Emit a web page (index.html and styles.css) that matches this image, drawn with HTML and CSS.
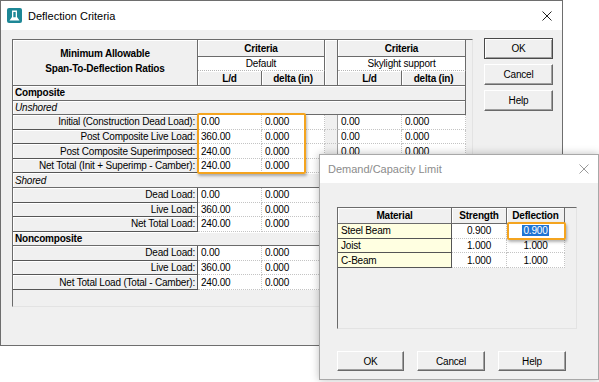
FILE: index.html
```html
<!DOCTYPE html>
<html lang="en">
<head>
    <meta charset="UTF-8">
    <title>Deflection Criteria</title>
    <link rel="stylesheet" href="styles.css">
</head>
<body>
    <div class="win main">
        <div class="titlebar">
            <svg class="app-icon" width="15" height="15" viewBox="0 0 15 15">
                <rect width="15" height="15" rx="2" fill="#1d8796"/>
                <path d="M5 2.5h5v6.5l2.5 3.5h-10l2.5-3.5z" fill="#fff"/>
                <path d="M6.3 4h2.4v5.2h-2.4z" fill="#1d8796"/>
            </svg>
            <span class="title">Deflection Criteria</span>
            <svg class="close" width="10" height="10" viewBox="0 0 10 10">
                <path d="M0.5 0.5l9 9M9.5 0.5l-9 9" stroke="#222" stroke-width="1"/>
            </svg>
        </div>
        <div class="win-body">
            <div class="frame">
                <div class="grid">
                    <div class="hd hd-main">Minimum Allowable<br>Span-To-Deflection Ratios</div>
                    <div class="hd crit-a">Criteria</div>
                    <div class="hd gap-hd"></div>
                    <div class="hd crit-b">Criteria</div>
                    <div class="sub sub-a">Default</div>
                    <div class="sub sub-b">Skylight support</div>
                    <div class="hd r3 c2">L/d</div>
                    <div class="hd r3 c3">delta (in)</div>
                    <div class="hd r3 c5">L/d</div>
                    <div class="hd r3 c6">delta (in)</div>

                    <div class="sec bold">Composite</div>
                    <div class="sec ital">Unshored</div>

                    <div class="lbl">Initial (Construction Dead Load):</div>
                    <div class="val">0.00</div><div class="val">0.000</div><div class="gap"></div><div class="val">0.00</div><div class="val">0.000</div>
                    <div class="lbl">Post Composite Live Load:</div>
                    <div class="val">360.00</div><div class="val">0.000</div><div class="gap"></div><div class="val">0.00</div><div class="val">0.000</div>
                    <div class="lbl">Post Composite Superimposed:</div>
                    <div class="val">240.00</div><div class="val">0.000</div><div class="gap"></div><div class="val">0.00</div><div class="val">0.000</div>
                    <!-- right-hand values below are hidden under the second dialog -->
                    <div class="lbl">Net Total (Init + Superimp - Camber):</div>
                    <div class="val">240.00</div><div class="val">0.000</div><div class="gap"></div><div class="val"></div><div class="val"></div>

                    <div class="sec ital">Shored</div>
                    <div class="lbl">Dead Load:</div>
                    <div class="val">0.00</div><div class="val">0.000</div><div class="gap"></div><div class="val"></div><div class="val"></div>
                    <div class="lbl">Live Load:</div>
                    <div class="val">360.00</div><div class="val">0.000</div><div class="gap"></div><div class="val"></div><div class="val"></div>
                    <div class="lbl">Net Total Load:</div>
                    <div class="val">240.00</div><div class="val">0.000</div><div class="gap"></div><div class="val"></div><div class="val"></div>

                    <div class="sec bold">Noncomposite</div>
                    <div class="lbl">Dead Load:</div>
                    <div class="val">0.00</div><div class="val">0.000</div><div class="gap"></div><div class="val"></div><div class="val"></div>
                    <div class="lbl">Live Load:</div>
                    <div class="val">360.00</div><div class="val">0.000</div><div class="gap"></div><div class="val"></div><div class="val"></div>
                    <div class="lbl">Net Total Load (Total - Camber):</div>
                    <div class="val">240.00</div><div class="val">0.000</div><div class="gap"></div><div class="val"></div><div class="val"></div>
                </div>
            </div>
            <div class="buttons">
                <div class="btn default">OK</div>
                <div class="btn">Cancel</div>
                <div class="btn">Help</div>
            </div>
        </div>
    </div>

    <div class="mark mark-main"></div>

    <div class="win dialog">
        <div class="titlebar dlg-title">
            <span class="title inactive">Demand/Capacity Limit</span>
            <svg class="close dlg-close" width="10" height="10" viewBox="0 0 10 10">
                <path d="M0.5 0.5l9 9M9.5 0.5l-9 9" stroke="#9a9a9a" stroke-width="1"/>
            </svg>
        </div>
        <div class="dlg-body">
            <div class="frame dlg-frame">
                <div class="grid dlg-grid">
                    <div class="hd">Material</div>
                    <div class="hd">Strength</div>
                    <div class="hd">Deflection</div>

                    <div class="mat">Steel Beam</div>
                    <div class="val center">0.900</div>
                    <div class="val center"><span class="sel">0.900</span></div>
                    <div class="mat">Joist</div>
                    <div class="val center">1.000</div>
                    <div class="val center">1.000</div>
                    <div class="mat">C-Beam</div>
                    <div class="val center">1.000</div>
                    <div class="val center">1.000</div>
                </div>
            </div>
            <div class="dlg-buttons">
                <div class="btn">OK</div>
                <div class="btn">Cancel</div>
                <div class="btn">Help</div>
            </div>
        </div>
    </div>

    <div class="mark mark-dlg"></div>
</body>
</html>
```

FILE: styles.css
```css
* {
    margin: 0;
    padding: 0;
    box-sizing: border-box;
}
body {
    position: relative;
    width: 599px;
    height: 382px;
    overflow: hidden;
    background: #fff;
    font-family: "Liberation Sans", Arial, sans-serif;
    font-size: 10px;
    letter-spacing: -0.2px;
    color: #000;
}
.win {
    background: #f0f0f0;
    border: 1px solid #6e6e6e;
}
.main {
    width: 563px;
    height: 346px;
}
.titlebar {
    height: 29px;
    background: #fff;
    display: flex;
    align-items: center;
    padding-left: 6px;
}
.app-icon {
    flex: none;
}
.title {
    font-size: 11px;
    letter-spacing: 0;
    margin-left: 6px;
}
.close {
    margin-left: auto;
    margin-right: 10px;
}
.win-body {
    display: flex;
    align-items: flex-start;
    padding: 8px 0 0 11px;
}
.frame {
    margin-top: 1px;
    width: 461px;
    height: 268px;
    border-top: 1px solid #6b6b6b;
    border-left: 1px solid #6b6b6b;
    border-right: 1px solid #e3e3e3;
    border-bottom: 1px solid #e3e3e3;
}
.grid {
    display: grid;
    grid-template-columns: 185px 64px 63px 13px 64px 64px;
    grid-template-rows: 17px 14px 15px;
    grid-auto-rows: 14.57px;
    width: 453px;
}
.grid > div {
    display: flex;
    align-items: center;
    white-space: nowrap;
    overflow: hidden;
}
.hd {
    justify-content: center;
    font-weight: bold;
    background: #f0f0f0;
    border-right: 1px solid #6b6b6b;
    border-bottom: 1px solid #6b6b6b;
    box-shadow: inset 1px 1px 0 #fff;
}
.hd-main {
    grid-column: 1;
    grid-row: 1 / span 3;
    text-align: center;
    line-height: 15px;
    padding-bottom: 4px;
}
.crit-a {
    grid-column: 2 / span 2;
    grid-row: 1;
}
.gap-hd {
    grid-column: 4;
    grid-row: 1 / span 3;
}
.crit-b {
    grid-column: 5 / span 2;
    grid-row: 1;
}
.sub {
    justify-content: center;
    background: #fff;
    border-right: 1px solid #6b6b6b;
    border-bottom: 1px dotted #b5b5b5;
}
.sub-a {
    grid-column: 2 / span 2;
    grid-row: 2;
}
.sub-b {
    grid-column: 5 / span 2;
    grid-row: 2;
}
.r3 {
    grid-row: 3;
}
.c2 { grid-column: 2; }
.c3 { grid-column: 3; }
.c5 { grid-column: 5; }
.c6 { grid-column: 6; }
.sec {
    grid-column: 1 / -1;
    padding-left: 2px;
    background: #f0f0f0;
    border-right: 1px solid #6b6b6b;
    border-bottom: 1px solid #6b6b6b;
    box-shadow: inset 1px 1px 0 #fff;
}
.bold {
    font-weight: bold;
}
.ital {
    font-style: italic;
}
.lbl {
    justify-content: flex-end;
    padding-right: 2px;
    background: #f0f0f0;
    border-right: 1px solid #555;
    border-bottom: 1px solid #555;
    box-shadow: inset 1px 1px 0 #fff;
}
.val {
    padding-left: 3px;
    background: #fff;
    border-right: 1px dotted #c4c4c4;
    border-bottom: 1px dotted #c4c4c4;
}
.val.center {
    justify-content: center;
    padding-left: 0;
}
.gap {
    background: #f0f0f0;
    border-right: 1px solid #a0a0a0;
    border-bottom: 1px dotted #c4c4c4;
}
.buttons {
    margin-left: 11px;
    display: flex;
    flex-direction: column;
    gap: 5px;
}
.btn {
    width: 69px;
    height: 21px;
    display: flex;
    align-items: center;
    justify-content: center;
    background: #f0f0f0;
    border: 1px solid;
    border-color: #fff #696969 #696969 #fff;
    box-shadow: inset -1px -1px 0 #a0a0a0;
}
.btn.default {
    border-color: #4a4a4a;
    box-shadow: inset 1px 1px 0 #fff, inset -1px -1px 0 #a0a0a0;
}
.mark {
    position: absolute;
    border: 2px solid #f4a41f;
    border-radius: 2px;
    box-shadow: 1px 2px 3px rgba(0, 0, 0, 0.3);
}
.mark-main {
    left: 197px;
    top: 113px;
    width: 109px;
    height: 61px;
}
.dialog {
    position: absolute;
    left: 319px;
    top: 154px;
    width: 280px;
    height: 226px;
    border-color: #a8a8a8;
    box-shadow: 0 0 8px rgba(0, 0, 0, 0.25);
}
.dlg-title {
    height: 28px;
    padding-left: 2px;
}
.title.inactive {
    color: #8c8c8c;
}
.dlg-close {
    margin-right: 9px;
}
.dlg-body {
    padding: 24px 0 0 17px;
}
.dlg-frame {
    margin-top: 0;
    width: 240px;
    height: 122px;
}
.dlg-grid {
    grid-template-columns: 114px 55px 58px;
    grid-template-rows: 16px 14.5px 14.5px 15px;
    width: 227px;
}
.mat {
    padding-left: 3px;
    background: #ffffe1;
    border-right: 1px solid #555;
    border-bottom: 1px solid #555;
}
.sel {
    background: #1f74d4;
    color: #fff;
    padding: 0 1px;
}
.dlg-buttons {
    display: flex;
    gap: 13px;
    margin-top: 22px;
}
.dlg-buttons .btn {
    width: 68px;
    height: 20px;
}
.dlg-buttons .btn:first-child {
    width: 67px;
}
.mark-dlg {
    left: 507px;
    top: 222px;
    width: 59px;
    height: 18px;
}
```
